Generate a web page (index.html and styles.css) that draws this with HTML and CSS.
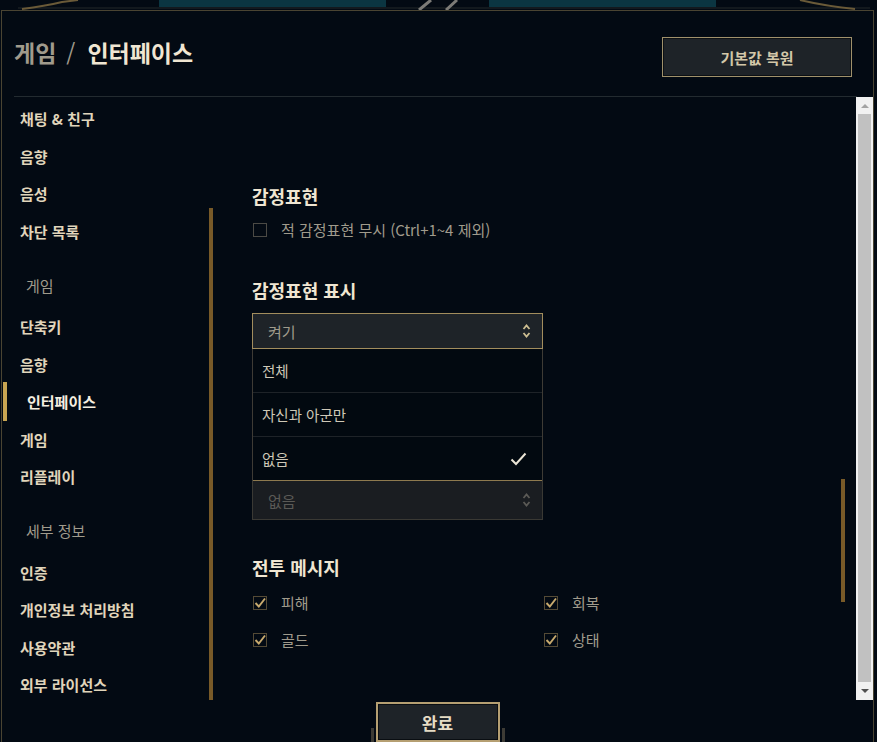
FILE: index.html
```html
<!DOCTYPE html>
<html lang="ko">
<head>
<meta charset="utf-8">
<title>설정</title>
<link rel="stylesheet" href="styles.css">
</head>
<body>
<div class="topdeco">
  <svg width="877" height="10" viewBox="0 0 877 10">
    <rect x="159" y="0" width="227" height="7" fill="#0b3541"/>
    <rect x="489" y="0" width="227" height="7" fill="#0b3541"/>
    <line x1="18" y1="8" x2="870" y2="8" stroke="#25282a" stroke-width="1"/>
    <path d="M22 9 Q45 6 62 2 L78 0" stroke="#6a5a38" stroke-width="2" fill="none"/>
    <path d="M800 0 Q825 6 855 9" stroke="#6a5a38" stroke-width="2" fill="none"/>
    <path d="M419 10 L431 0" stroke="#7c7b77" stroke-width="3"/>
    <path d="M446 10 L457 0" stroke="#7c7b77" stroke-width="3"/>
  </svg>
</div>
<div class="frame">
  <header class="header">
    <h1 class="title"><span class="crumb">게임</span><span class="slash">/</span><span class="current">인터페이스</span></h1>
    <button class="btn-reset">기본값 복원</button>
  </header>
  <div class="sep"></div>
  <div class="main">
    <nav class="nav">
      <ul class="nav-list">
        <li class="nav-item">채팅 &amp; 친구</li>
        <li class="nav-item">음향</li>
        <li class="nav-item">음성</li>
        <li class="nav-item">차단 목록</li>
        <li class="nav-head">게임</li>
        <li class="nav-item">단축키</li>
        <li class="nav-item">음향</li>
        <li class="nav-item active"><span class="active-bar"></span><span class="label">인터페이스</span></li>
        <li class="nav-item">게임</li>
        <li class="nav-item">리플레이</li>
        <li class="nav-head">세부 정보</li>
        <li class="nav-item">인증</li>
        <li class="nav-item">개인정보 처리방침</li>
        <li class="nav-item">사용약관</li>
        <li class="nav-item">외부 라이선스</li>
      </ul>
      <div class="nav-track"><div class="nav-thumb"></div></div>
    </nav>
    <section class="content">
      <div class="content-inner">
        <h2 class="h">감정표현</h2>
        <div class="check-row first-row"><span class="cb"></span><span class="cb-label">적 감정표현 무시 (Ctrl+1~4 제외)</span></div>

        <h2 class="h h-gap">감정표현 표시</h2>
        <div class="select open">
          <span>켜기</span>
          <svg class="arrows" width="9" height="16" viewBox="0 0 9 16"><path d="M1.5 6 L4.5 2.5 L7.5 6 M1.5 10 L4.5 13.5 L7.5 10" stroke="#cdbe91" stroke-width="1.8" fill="none"/></svg>
        </div>
        <ul class="options">
          <li class="option">전체</li>
          <li class="option">자신과 아군만</li>
          <li class="option selected"><span>없음</span>
            <svg width="17" height="14" viewBox="0 0 17 14"><path d="M1.5 7.5 L6 12 L15.5 1.5" stroke="#ebe5d6" stroke-width="2" fill="none"/></svg>
          </li>
        </ul>
        <div class="select disabled">
          <span>없음</span>
          <svg class="arrows" width="9" height="16" viewBox="0 0 9 16"><path d="M1.5 6 L4.5 2.5 L7.5 6 M1.5 10 L4.5 13.5 L7.5 10" stroke="#5b5a56" stroke-width="1.8" fill="none"/></svg>
        </div>

        <h2 class="h h-gap3">전투 메시지</h2>
        <div class="check-grid">
          <div class="check-row"><span class="cb checked"><svg width="14" height="14" viewBox="0 0 14 14"><path d="M2.5 7 L5.8 10.5 L12 2.5" stroke="#c8aa6e" stroke-width="1.9" fill="none"/></svg></span><span class="cb-label">피해</span></div>
          <div class="check-row"><span class="cb checked"><svg width="14" height="14" viewBox="0 0 14 14"><path d="M2.5 7 L5.8 10.5 L12 2.5" stroke="#c8aa6e" stroke-width="1.9" fill="none"/></svg></span><span class="cb-label">회복</span></div>
          <div class="check-row"><span class="cb checked"><svg width="14" height="14" viewBox="0 0 14 14"><path d="M2.5 7 L5.8 10.5 L12 2.5" stroke="#c8aa6e" stroke-width="1.9" fill="none"/></svg></span><span class="cb-label">골드</span></div>
          <div class="check-row"><span class="cb checked"><svg width="14" height="14" viewBox="0 0 14 14"><path d="M2.5 7 L5.8 10.5 L12 2.5" stroke="#c8aa6e" stroke-width="1.9" fill="none"/></svg></span><span class="cb-label">상태</span></div>
        </div>
      </div>
      <div class="content-track"><div class="content-thumb"></div></div>
    </section>
    <div class="scrollbar">
      <div class="sb-btn"><span class="tri-up"></span></div>
      <div class="sb-thumb"></div>
      <div class="sb-btn sb-down"><span class="tri-down"></span></div>
    </div>
  </div>
  <footer class="footer">
    <button class="btn-done">완료</button>
  </footer>
</div>
</body>
</html>
```

FILE: styles.css
```css
* {
  box-sizing: border-box;
  margin: 0;
  padding: 0;
}

html, body {
  width: 877px;
  height: 742px;
  overflow: hidden;
}

body {
  background: #030a13;
  font-family: "Noto Sans CJK KR", "Noto Sans", sans-serif;
  color: #a09b8c;
}

.topdeco {
  height: 10px;
}

.topdeco svg {
  display: block;
}

.frame {
  margin-left: 1px;
  width: 873px;
  height: 732px;
  border: 1px solid #4a4432;
  border-bottom: none;
  display: flex;
  flex-direction: column;
}

.header {
  height: 85px;
  flex: none;
  display: flex;
  justify-content: space-between;
  align-items: flex-start;
  padding: 0 21px 0 12px;
}

.title {
  margin-top: 26px;
  display: flex;
  font-size: 23px;
  line-height: 30px;
  font-weight: 700;
}

.crumb {
  color: #a09b8c;
}

.slash {
  color: #a09b8c;
  font-weight: 400;
  margin: 0 12px 0 10px;
}

.current {
  color: #f0e6d2;
}

.btn-reset {
  margin-top: 26px;
  width: 190px;
  height: 40px;
  background: #1e2328;
  border: 1px solid #a0916b;
  box-shadow: inset 0 0 0 1px #0c1014;
  color: #d3c7a8;
  font: 700 15px "Noto Sans CJK KR", sans-serif;
}

.sep {
  flex: none;
  height: 1px;
  margin: 0 16px 0 12px;
  background: #232b30;
}

.main {
  flex: none;
  height: 603px;
  display: flex;
}

/* left navigation */
.nav {
  width: 213px;
  display: flex;
}

.nav-list {
  flex: 1;
  list-style: none;
  padding-top: 3px;
}

.nav-item {
  height: 37.5px;
  display: flex;
  align-items: center;
  padding-left: 18px;
  font-size: 15px;
  font-weight: 700;
  color: #e0d5bb;
}

.nav-item.active {
  padding-left: 1px;
  color: #f5eee0;
}

.active-bar {
  flex: none;
  width: 4px;
  height: 39px;
  background: #c8a552;
}

.nav-item.active .label {
  margin-left: 20px;
}

.nav-head {
  margin-top: 12px;
  height: 46px;
  display: flex;
  align-items: center;
  padding-left: 24px;
  font-size: 15px;
  color: #a09b8c;
}

.nav-track {
  width: 4px;
  margin-right: 2px;
}

.nav-thumb {
  margin-top: 111px;
  height: 492px;
  background: #785a28;
}

/* content */
.content {
  width: 641px;
  display: flex;
}

.content-inner {
  flex: 1;
  padding: 89px 0 0 37px;
}

.content-track {
  width: 4px;
  margin-right: 11px;
}

.content-thumb {
  margin-top: 382px;
  height: 123px;
  background: #785a28;
}

.h {
  font-size: 18px;
  line-height: 20px;
  font-weight: 700;
  color: #f0e6d2;
}

.h-gap {
  margin-top: 40px;
}

.h-gap3 {
  margin-top: 37px;
}

.check-row {
  height: 20px;
  display: flex;
  align-items: center;
}

.first-row {
  margin-top: 14px;
}

.cb {
  flex: none;
  width: 14px;
  height: 14px;
  margin-left: 1px;
  border: 1px solid #4b4a45;
  display: flex;
  align-items: center;
  justify-content: center;
}

.cb.checked {
  border-color: #544a35;
}

.cb svg {
  display: block;
  flex: none;
}

.cb-label {
  margin-left: 14px;
  font-size: 15px;
  line-height: 20px;
  color: #a09b8c;
}

.select {
  width: 291px;
  display: flex;
  align-items: center;
  justify-content: space-between;
  padding: 0 11px 0 15px;
  font-size: 15px;
}

.select.open {
  margin-top: 13px;
  height: 36px;
  background: #1e2328;
  border: 1px solid #a28d5d;
  color: #a09b8c;
}

.select.disabled {
  height: 39px;
  background: #1a1d21;
  border: 1px solid #3a3934;
  border-top: none;
  color: #5b5a56;
}

.arrows {
  display: block;
}

.options {
  width: 291px;
  list-style: none;
  background: #020910;
  border-left: 1px solid #3e3b35;
  border-right: 1px solid #3e3b35;
}

.option {
  height: 44px;
  display: flex;
  align-items: center;
  justify-content: space-between;
  padding: 0 15px 0 9px;
  border-bottom: 1px solid #1e2328;
  font-size: 14.5px;
  color: #cec8b7;
}

.option.selected {
  border-bottom-color: #8e7a4f;
}

.option svg {
  display: block;
}

.check-grid {
  margin-top: 16px;
  display: grid;
  grid-template-columns: 291px 291px;
  row-gap: 17px;
}

/* browser scrollbar */
.scrollbar {
  width: 17px;
  background: #f1f1f1;
  display: flex;
  flex-direction: column;
}

.sb-btn {
  flex: none;
  height: 17px;
  display: flex;
  align-items: center;
  justify-content: center;
}

.sb-down {
  height: 18px;
}

.tri-up {
  width: 0;
  height: 0;
  border-left: 4px solid transparent;
  border-right: 4px solid transparent;
  border-bottom: 4px solid #a3a3a3;
}

.tri-down {
  width: 0;
  height: 0;
  border-left: 4px solid transparent;
  border-right: 4px solid transparent;
  border-top: 4px solid #505050;
}

.sb-thumb {
  flex: 1;
  margin: 0 2px;
  background: #c1c1c1;
}

/* footer */
.footer {
  flex: none;
  height: 42px;
  display: flex;
  justify-content: center;
  align-items: flex-start;
  padding-top: 2px;
}

.btn-done {
  position: relative;
  width: 124px;
  height: 40px;
  background: #1e2328;
  border: 2px solid #b59f72;
  box-shadow: inset 0 0 0 1px #0a0e12;
  color: #e6dcc4;
  font: 700 17px "Noto Sans CJK KR", sans-serif;
}

.btn-done::before,
.btn-done::after {
  content: "";
  position: absolute;
  bottom: -2px;
  width: 3px;
  height: 14px;
  background: #3d3b35;
}

.btn-done::before {
  left: -7px;
}

.btn-done::after {
  right: -7px;
}
```
